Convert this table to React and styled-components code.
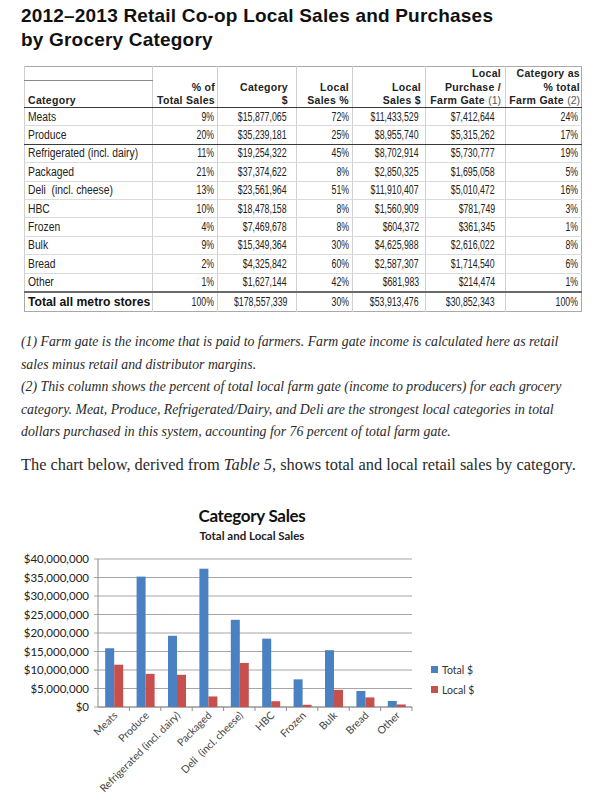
import React from 'react'
import styled, { createGlobalStyle } from 'styled-components';

// column widths and the right padding that each column keeps for its figures
const columns = [128, 65, 79, 56, 73, 80, 76];
const figurePad = [0, 3, 9, 3, 6, 10, 3];
const headPad = [0, 2, 8, 3, 4, 4, 1];

const headRows = [
    ['', '', '', '', '', 'Local', 'Category as'],
    ['', '% of', 'Category', 'Local', 'Local', 'Purchase /', '% total'],
    ['Category', 'Total Sales', '$', 'Sales %', 'Sales $', ['Farm Gate', '(1)'], ['Farm Gate', '(2)']],
];

const rows = [
    ['Meats', '9%', '$15,877,065', '72%', '$11,433,529', '$7,412,644', '24%'],
    ['Produce', '20%', '$35,239,181', '25%', '$8,955,740', '$5,315,262', '17%'],
    ['Refrigerated (incl. dairy)', '11%', '$19,254,322', '45%', '$8,702,914', '$5,730,777', '19%'],
    ['Packaged', '21%', '$37,374,622', '8%', '$2,850,325', '$1,695,058', '5%'],
    ['Deli\u00a0 (incl. cheese)', '13%', '$23,561,964', '51%', '$11,910,407', '$5,010,472', '16%'],
    ['HBC', '10%', '$18,478,158', '8%', '$1,560,909', '$781,749', '3%'],
    ['Frozen', '4%', '$7,469,678', '8%', '$604,372', '$361,345', '1%'],
    ['Bulk', '9%', '$15,349,364', '30%', '$4,625,988', '$2,616,022', '8%'],
    ['Bread', '2%', '$4,325,842', '60%', '$2,587,307', '$1,714,540', '6%'],
    ['Other', '1%', '$1,627,144', '42%', '$681,983', '$214,474', '1%'],
];

const total = ['Total all metro stores', '100%', '$178,557,339', '30%', '$53,913,476', '$30,852,343', '100%'];

const chartData = [
    { label: 'Meats', total: 15.877, local: 11.434 },
    { label: 'Produce', total: 35.239, local: 8.956 },
    { label: 'Refrigerated (incl. dairy)', total: 19.254, local: 8.703 },
    { label: 'Packaged', total: 37.375, local: 2.850 },
    { label: 'Deli\u00a0 (incl. cheese)', total: 23.562, local: 11.910 },
    { label: 'HBC', total: 18.478, local: 1.561 },
    { label: 'Frozen', total: 7.470, local: 0.604 },
    { label: 'Bulk', total: 15.349, local: 4.626 },
    { label: 'Bread', total: 4.326, local: 2.587 },
    { label: 'Other', total: 1.627, local: 0.682 },
];

// plot area in page coordinates (the svg viewBox starts at the page offset)
const PLOT = { left: 98, right: 412, top: 560, bottom: 708 };
const PER_M = (PLOT.bottom - PLOT.top) / 40;
const SLOT = (PLOT.right - PLOT.left) / chartData.length;
const BLUE = '#4a81c2';
const RED = '#c8504c';

function SalesChart() {
    const ticks = [0, 5, 10, 15, 20, 25, 30, 35, 40];
    return (
        <ChartSvg width="440" height="319" viewBox="21 490 440 319">
            <ChartTitle x="252" y="523">Category Sales</ChartTitle>
            <ChartSubtitle x="252" y="541">Total and Local Sales</ChartSubtitle>

            {ticks.map((t) => {
                const y = PLOT.bottom - t * PER_M;
                return (
                    <g key={t}>
                        <line x1={PLOT.left - 4} x2={PLOT.right} y1={y} y2={y} stroke="#a6a6a6" strokeWidth="1" />
                        <AxisLabel x="89" y={y + 4}>
                            {t === 0 ? '$0' : `$${t},000,000`}
                        </AxisLabel>
                    </g>
                );
            })}
            <line x1={PLOT.left} x2={PLOT.left} y1={PLOT.top} y2={PLOT.bottom} stroke="#8c8c8c" />
            <line x1={PLOT.left} x2={PLOT.right} y1={PLOT.bottom} y2={PLOT.bottom} stroke="#8c8c8c" />
            {chartData.map((_, i) => (
                <line key={i} x1={PLOT.left + SLOT * (i + 1)} x2={PLOT.left + SLOT * (i + 1)}
                    y1={PLOT.bottom} y2={PLOT.bottom + 4} stroke="#8c8c8c" />
            ))}

            {chartData.map((d, i) => {
                const cx = PLOT.left + SLOT * (i + 0.5) + 0.5;
                const ht = d.total * PER_M;
                const hl = d.local * PER_M;
                return (
                    <g key={d.label}>
                        <rect x={cx - 9} y={PLOT.bottom - ht} width="9" height={ht} fill={BLUE} />
                        <rect x={cx} y={PLOT.bottom - hl} width="9" height={hl} fill={RED} />
                        <CatLabel x={cx + 4} y={PLOT.bottom + 9}
                            transform={`rotate(-45 ${cx + 4} ${PLOT.bottom + 9})`}>
                            {d.label}
                        </CatLabel>
                    </g>
                );
            })}

            <rect x="431" y="667" width="7" height="7" fill={BLUE} />
            <LegendText x="442" y="675">Total $</LegendText>
            <rect x="431" y="687" width="7" height="7" fill={RED} />
            <LegendText x="442" y="695">Local $</LegendText>
        </ChartSvg>
    );
}

function App() {
    return (
        <Page>
            <GlobalStyle />
            <Title>
                2012–2013 Retail Co-op Local Sales and Purchases<br />
                by Grocery Category
            </Title>

            <Table>
                <colgroup>
                    {columns.map((w, i) => <col key={i} style={{ width: w }} />)}
                </colgroup>
                <thead>
                    {headRows.map((r, ri) => (
                        <HeadRow key={ri} $last={ri === 2}>
                            {r.map((c, ci) => (
                                <HeadCell key={ci} $left={ci === 0} $pad={headPad[ci]} $rule={ri === 0 && ci === 0}>
                                    {Array.isArray(c) ? <>{c[0]} <Note>{c[1]}</Note></> : c}
                                </HeadCell>
                            ))}
                        </HeadRow>
                    ))}
                </thead>
                <tbody>
                    {rows.map((r) => (
                        <BodyRow key={r[0]} $dark={r[0] === 'Produce'}>
                            {r.map((c, ci) => (
                                ci === 0
                                    ? <NameCell key={ci}><Name>{c}</Name></NameCell>
                                    : <Cell key={ci} $pad={figurePad[ci]}><Figure>{c}</Figure></Cell>
                            ))}
                        </BodyRow>
                    ))}
                    <TotalRow>
                        {total.map((c, ci) => (
                            ci === 0
                                ? <TotalName key={ci}>{c}</TotalName>
                                : <Cell key={ci} $pad={figurePad[ci]}><Figure>{c}</Figure></Cell>
                        ))}
                    </TotalRow>
                </tbody>
            </Table>

            <Notes>
                (1) Farm gate is the income that is paid to farmers. Farm gate income is calculated here as retail<br />
                sales minus retail and distributor margins.<br />
                (2) This column shows the percent of total local farm gate (income to producers) for each grocery<br />
                category. Meat, Produce, Refrigerated/Dairy, and Deli are the strongest local categories in total<br />
                dollars purchased in this system, accounting for 76 percent of total farm gate.
            </Notes>

            <Lead>
                The chart below, derived from <em>Table 5</em>, shows total and local retail sales by category.
            </Lead>

            <SalesChart />
        </Page>
    )
}

const GlobalStyle = createGlobalStyle`
    html, body {
        margin: 0;
        background: #fff;
    }
`;

const Page = styled.div`
    width: 613px;
    height: 809px;
    overflow: hidden;
    box-sizing: border-box;
    padding: 4px 21px 0;
    color: #1c1c1c;
`;

const Title = styled.h1`
    margin: 0;
    font-family: "Liberation Sans", Arial, sans-serif;
    font-weight: 700;
    font-size: 19px;
    line-height: 24px;
    letter-spacing: 0.2px;
    color: #111;
`;

const Table = styled.table`
    margin: 14px 0 0 3px;
    width: 557px;
    table-layout: fixed;
    border-collapse: collapse;
    border: 1px solid #a9a9a9;
    color: #222;
`;

const HeadRow = styled.tr`
    & > th {
        border-bottom: ${(p) => (p.$last ? '1px solid #3a3a3a' : 'none')};
    }
`;

const HeadCell = styled.th`
    height: 13px;
    padding: 0 ${(p) => p.$pad}px 0 3px;
    font-family: "Liberation Sans", Arial, sans-serif;
    font-size: 10.5px;
    font-weight: 700;
    line-height: 13px;
    letter-spacing: 0.3px;
    white-space: nowrap;
    text-align: ${(p) => (p.$left ? 'left' : 'right')};
    border-left: 1px solid #cfcfcf;
    && {
        border-bottom: ${(p) => (p.$rule ? '1px solid #8a8a8a' : undefined)};
    }
`;

const Note = styled.span`
    font-weight: 400;
    color: #555;
    letter-spacing: 0;
`;

const BodyRow = styled.tr`
    & > td {
        border-bottom: 1px solid ${(p) => (p.$dark ? '#3a3a3a' : '#dadada')};
    }
`;

const Cell = styled.td`
    height: 17.4px;
    padding: 0 ${(p) => p.$pad}px 0 3px;
    font-family: "Liberation Sans", Arial, sans-serif;
    font-size: 12.5px;
    line-height: 14px;
    white-space: nowrap;
    text-align: right;
    border-left: 1px solid #d0d0d0;
`;

// the table is set in a condensed face: squeeze a regular one
const Figure = styled.span`
    display: inline-block;
    margin-left: -30px;
    transform: scaleX(0.7);
    transform-origin: right center;
`;

const NameCell = styled.td`
    height: 17.4px;
    padding: 0 0 0 3px;
    font-family: "Liberation Sans", Arial, sans-serif;
    font-size: 12px;
    line-height: 14px;
    white-space: nowrap;
    border-left: 1px solid #d0d0d0;
`;

const Name = styled.span`
    display: inline-block;
    margin-right: -24px;
    transform: scaleX(0.86);
    transform-origin: left center;
`;

const TotalRow = styled.tr`
    & > td {
        border-top: 2px solid #6a6a6a;
        height: 18px;
    }
`;

const TotalName = styled.td`
    padding: 0 0 0 3px;
    font-family: "Liberation Sans", Arial, sans-serif;
    font-size: 12.2px;
    font-weight: 700;
    white-space: nowrap;
    color: #111;
`;

const Notes = styled.p`
    margin: 19.5px 0 0;
    font-family: "Liberation Serif", "Times New Roman", serif;
    font-style: italic;
    font-size: 13.8px;
    line-height: 22.5px;
    white-space: nowrap;
    color: #2a2a2a;
`;

const Lead = styled.p`
    margin: 10px 0 0;
    font-family: "Liberation Serif", "Times New Roman", serif;
    font-size: 16.4px;
    line-height: 21.5px;
    white-space: nowrap;
    color: #2a2a2a;
`;

const ChartSvg = styled.svg`
    display: block;
    margin-top: 13.5px;
    overflow: visible;
`;

const ChartTitle = styled.text`
    font-family: Lato, "Open Sans", sans-serif;
    font-weight: 700;
    font-size: 17px;
    letter-spacing: -0.3px;
    text-anchor: middle;
    fill: #111;
`;

const ChartSubtitle = styled.text`
    font-family: Lato, "Open Sans", sans-serif;
    font-weight: 700;
    font-size: 11.5px;
    text-anchor: middle;
    fill: #222;
`;

const AxisLabel = styled.text`
    font-family: Lato, "Open Sans", sans-serif;
    font-size: 11.5px;
    text-anchor: end;
    fill: #222;
`;

const CatLabel = styled.text`
    font-family: Lato, "Open Sans", sans-serif;
    font-size: 10.5px;
    text-anchor: end;
    fill: #444;
`;

const LegendText = styled.text`
    font-family: Lato, "Open Sans", sans-serif;
    font-size: 10.5px;
    fill: #333;
`;

export default App
